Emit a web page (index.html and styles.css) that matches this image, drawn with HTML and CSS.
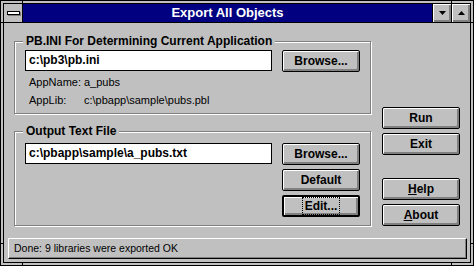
FILE: index.html
```html
<!DOCTYPE html>
<html lang="en">
<head>
    <meta charset="UTF-8">
    <meta name="viewport" content="width=device-width, initial-scale=1.0">
    <title>Export All Objects</title>
    <link rel="stylesheet" href="styles.css">
</head>
<body>
    <div class="window">
        <div class="frame">
            <div class="titlebar">
                <div class="sysmenu"><span class="sysbar"></span></div>
                <div class="caption">Export All Objects</div>
                <div class="winbtn">
                    <svg width="7" height="4" viewBox="0 0 7 4"><path d="M0 0H7L3.5 4Z"/></svg>
                </div>
                <div class="winbtn">
                    <svg width="7" height="4" viewBox="0 0 7 4"><path d="M0 4H7L3.5 0Z"/></svg>
                </div>
            </div>
            <div class="client">
                <div class="main">
                    <div class="groups">
                        <fieldset class="group group-ini">
                            <legend>PB.INI For Determining Current Application</legend>
                            <div class="row">
                                <div class="field">c:\pb3\pb.ini</div>
                                <button class="btn">Browse...</button>
                            </div>
                            <div class="info">
                                <span>AppName:</span><span>a_pubs</span>
                                <span>AppLib:</span><span>c:\pbapp\sample\pubs.pbl</span>
                            </div>
                        </fieldset>
                        <fieldset class="group group-out">
                            <legend>Output Text File</legend>
                            <div class="row">
                                <div class="field">c:\pbapp\sample\a_pubs.txt</div>
                                <div class="btn-col">
                                    <button class="btn">Browse...</button>
                                    <button class="btn">Default</button>
                                    <button class="btn btn-default"><span class="focus">Edit...</span></button>
                                </div>
                            </div>
                        </fieldset>
                    </div>
                    <div class="actions">
                        <button class="btn">Run</button>
                        <button class="btn">Exit</button>
                        <button class="btn btn-help"><u>H</u>elp</button>
                        <button class="btn"><u>A</u>bout</button>
                    </div>
                </div>
                <div class="status">Done: 9 libraries were exported OK</div>
            </div>
        </div>
    </div>
</body>
</html>
```

FILE: styles.css
```css
* {
    box-sizing: border-box;
}
body {
    margin: 0;
    background: #c0c0c0;
    font-family: "Liberation Sans", Arial, sans-serif;
    color: #000;
}
.window {
    position: relative;
    width: 474px;
    height: 266px;
    border: 1px solid #000;
    padding: 2px;
    background: #c0c0c0;
}
/* resize marks on the frame */
.window::before {
    content: "";
    position: absolute;
    left: 21px;
    top: 0;
    width: 1px;
    height: 2px;
    background: #000;
    box-shadow: 429px 0 #000, 0 262px #000, 429px 262px #000;
}
.window::after {
    content: "";
    position: absolute;
    left: 0;
    top: 21px;
    width: 2px;
    height: 1px;
    background: #000;
    box-shadow: 470px 0 #000, 0 221px #000, 470px 221px #000;
}
.frame {
    height: 100%;
    border: 1px solid #000;
    display: flex;
    flex-direction: column;
}
.titlebar {
    display: flex;
    height: 19px;
    border-bottom: 1px solid #000;
}
.sysmenu {
    width: 19px;
    border-right: 1px solid #000;
    display: flex;
    align-items: center;
    justify-content: center;
}
.sysbar {
    width: 13px;
    height: 4px;
    border: 1px solid #000;
    background: #fff;
    box-shadow: 1px 1px 0 #808080;
}
.caption {
    flex: 1;
    background: #000080;
    color: #fff;
    font-weight: bold;
    font-size: 13px;
    line-height: 18px;
    text-align: center;
}
.winbtn {
    width: 19px;
    border-left: 1px solid #000;
    display: flex;
    align-items: center;
    justify-content: center;
    box-shadow: inset 1px 1px #fff, inset -1px -1px #808080, inset -2px -2px #808080;
}
.client {
    flex: 1;
    display: flex;
    flex-direction: column;
    padding: 12px 3px 3px 4px;
}
.main {
    flex: 1;
    display: flex;
    padding-left: 6px;
}
.groups {
    width: 357px;
    display: flex;
    flex-direction: column;
    gap: 11px;
}
.group {
    margin: 0;
    min-width: 0;
    padding: 2px 0 0 10px;
    border: 1px solid #808080;
    box-shadow: inset 1px 1px #fff, 1px 1px #fff;
}
.group-ini {
    height: 79px;
}
.group-out {
    height: 101px;
    padding-top: 5px;
}
.group legend {
    margin-left: -2px;
    padding: 0 3px;
    font-size: 12px;
    font-weight: bold;
    line-height: 13px;
    background: #c0c0c0;
}
.row {
    display: flex;
    align-items: flex-start;
    gap: 10px;
}
.field {
    width: 247px;
    height: 21px;
    border: 1px solid #000;
    background: #fff;
    padding-left: 3px;
    font-size: 12px;
    font-weight: bold;
    line-height: 19px;
}
.btn {
    width: 78px;
    height: 22px;
    padding: 0;
    border: 1px solid #000;
    border-radius: 2px;
    background: #c0c0c0;
    box-shadow: inset 1px 1px #fff, inset -1px -1px #808080, inset -2px -2px #808080;
    font-family: "Liberation Sans", Arial, sans-serif;
    font-size: 12px;
    font-weight: bold;
    color: #000;
}
.btn-default {
    border-width: 2px;
}
.focus {
    padding: 1px 2px;
    border: 1px dotted #000;
}
.btn-col {
    display: flex;
    flex-direction: column;
    gap: 4px;
}
.info {
    display: grid;
    grid-template-columns: 55px auto;
    row-gap: 5px;
    margin-top: 4px;
    padding-left: 4px;
    font-size: 11px;
    line-height: 13px;
}
.actions {
    display: flex;
    flex-direction: column;
    gap: 4px;
    margin: 72px 0 0 11px;
}
.btn-help {
    margin-top: 19px;
}
.status {
    height: 21px;
    border: 1px solid;
    border-color: #fff #000 #000 #fff;
    box-shadow: inset -1px -1px #808080;
    padding-left: 5px;
    font-size: 10.5px;
    line-height: 19px;
}
```
